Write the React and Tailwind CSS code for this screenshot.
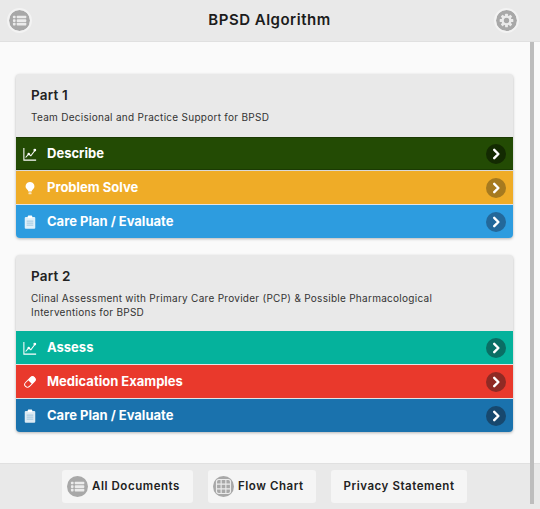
import React from "react";

const font = { fontFamily: '"Inter", "Open Sans", sans-serif' };

function ListGlyph({ className }) {
  return (
    <svg viewBox="0 0 24 24" className={className}>
      <circle cx="12" cy="12" r="12" fill="#a8a8a8" />
      <g fill="#ebebeb">
        <rect x="4.5" y="6.5" width="3" height="3" rx="0.8" />
        <rect x="4.5" y="10.6" width="3" height="3" rx="0.8" />
        <rect x="4.5" y="14.7" width="3" height="3" rx="0.8" />
        <rect x="8.8" y="6.5" width="11" height="3" rx="0.8" />
        <rect x="8.8" y="10.6" width="11" height="3" rx="0.8" />
        <rect x="8.8" y="14.7" width="11" height="3" rx="0.8" />
      </g>
    </svg>
  );
}

function GridGlyph({ className }) {
  return (
    <svg viewBox="0 0 24 24" className={className}>
      <circle cx="12" cy="12" r="12" fill="#a8a8a8" />
      <g stroke="#ebebeb" strokeWidth="1.3" fill="none">
        <rect x="4" y="4" width="16" height="16" rx="2.5" />
        <path d="M9.3 4v16M14.7 4v16M4 9.3h16M4 14.7h16" />
      </g>
    </svg>
  );
}

function Gear({ className }) {
  const teeth = [0, 45, 90, 135, 180, 225, 270, 315];
  return (
    <svg viewBox="0 0 24 24" className={className}>
      <circle cx="12" cy="12" r="12" fill="#a8a8a8" />
      <g fill="#ebebeb">
        {teeth.map((a) => (
          <rect key={a} x="10.4" y="4.2" width="3.2" height="4" rx="0.6" transform={`rotate(${a} 12 12)`} />
        ))}
      </g>
      <circle cx="12" cy="12" r="4.4" fill="none" stroke="#ebebeb" strokeWidth="2.6" />
    </svg>
  );
}

function ChartIcon() {
  return (
    <svg viewBox="0 0 16 16" className="w-[14px] h-[14px]" fill="none" stroke="#ffffff" strokeWidth="1.2">
      <path d="M1 1v14h14" />
      <path d="M3 12l3.5-4 2.5 2 4.5-6" />
      <circle cx="13.5" cy="3.5" r="1" fill="#ffffff" />
      <circle cx="6.5" cy="8" r="0.8" fill="#ffffff" />
    </svg>
  );
}

function BulbIcon() {
  return (
    <svg viewBox="0 0 16 16" className="w-[14px] h-[14px]">
      <path d="M8 1a5 5 0 0 0-3 9c.7.6 1 1.2 1 2h4c0-.8.3-1.4 1-2a5 5 0 0 0-3-9z" fill="#ffffff" />
      <rect x="6.2" y="12.8" width="3.6" height="2.4" rx="1" fill="#ffffff" opacity="0.7" />
    </svg>
  );
}

function ClipboardIcon() {
  return (
    <svg viewBox="0 0 16 16" className="w-[14px] h-[14px]">
      <rect x="2" y="2.2" width="12" height="13.6" rx="1.2" fill="#ffffff" opacity="0.85" />
      <rect x="5.5" y="0.6" width="5" height="3" rx="0.7" fill="#ffffff" />
      <path d="M4.2 7h7.6M4.2 9.3h7.6M4.2 11.6h7.6" stroke="#8fbbd8" strokeWidth="0.9" />
    </svg>
  );
}

function PillIcon() {
  return (
    <svg viewBox="0 0 16 16" className="w-[14px] h-[14px]">
      <g transform="rotate(-45 8 8)">
        <rect x="0.8" y="4.8" width="14.4" height="6.4" rx="3.2" fill="none" stroke="#ffffff" strokeWidth="1.1" />
        <path d="M8 4.8h4a3.2 3.2 0 0 1 0 6.4H8z" fill="#ffffff" />
      </g>
    </svg>
  );
}

function Chevron({ bg }) {
  return (
    <span className={`w-5 h-5 rounded-full flex items-center justify-center shrink-0 ${bg}`}>
      <svg viewBox="0 0 12 12" className="w-3 h-3" fill="none" stroke="#ffffff" strokeWidth="2.4" strokeLinecap="round" strokeLinejoin="round">
        <path d="M4.2 1.8L8.4 6 4.2 10.2" />
      </svg>
    </span>
  );
}

function Row({ icon, label, bg, chevron }) {
  return (
    <div className={`flex items-center pl-[7px] pr-[7px] text-white font-bold text-[13px] ${bg}`}>
      <span className="w-[14px] flex justify-center shrink-0">{icon}</span>
      <span className="ml-[10px] flex-1">{label}</span>
      <Chevron bg={chevron} />
    </div>
  );
}

function Card({ title, subtitle, children, headH }) {
  return (
    <section className="rounded-[4px] overflow-hidden shadow-[0_1px_3px_rgba(0,0,0,0.28)] bg-[#e9e9e9]">
      <div className={`px-[15px] pt-[13px] ${headH}`}>
        <h2 className="text-[13.5px] leading-[17px] font-semibold tracking-[0.2px] text-[#222222]">{title}</h2>
        <p className="mt-[6px] text-[10px] leading-[14px] tracking-[0.28px] text-[#333333]">{subtitle}</p>
      </div>
      <div className="flex flex-col">{children}</div>
    </section>
  );
}

function FootButton({ icon, label, className }) {
  return (
    <div className={`h-[33px] rounded-[3px] bg-[#f5f5f5] flex items-center gap-[4px] text-[11.5px] font-semibold text-[#222222] tracking-[0.55px] ${className}`}>
      {icon}
      <span>{label}</span>
    </div>
  );
}

export default function App() {
  return (
    <div style={font} className="relative w-[540px] h-[509px] flex flex-col overflow-hidden bg-[#fafafa]">
      <header className="h-[42px] shrink-0 bg-[#e9e9e9] border-b border-[#e0e0e0] grid grid-cols-[1fr_auto_1fr] items-center pl-[7px] pr-[21px]">
        <ListGlyph className="w-[21px] h-[21px] rounded-full border-2 border-[#f3f3f3] box-content" />
        <h1 className="text-[15px] font-semibold text-[#1c1c1c] tracking-[0.5px] pl-[13px]">BPSD Algorithm</h1>
        <Gear className="w-[21px] h-[21px] rounded-full border-2 border-[#f3f3f3] box-content justify-self-end" />
      </header>

      <main className="flex-1 pt-[32px] pl-[16px] pr-[27px] flex flex-col gap-[17px]">
        <Card title="Part 1" subtitle="Team Decisional and Practice Support for BPSD" headH="h-[63px]">
          <Row icon={<ChartIcon />} label="Describe" bg="bg-[#234b04] h-[33px] border-y border-[#1b3a03]" chevron="bg-[#132a02]" />
          <div className="h-[1px] bg-[#d9d9d9]" />
          <Row icon={<BulbIcon />} label="Problem Solve" bg="bg-[#efac27] h-[33px]" chevron="bg-[#a67a1f]" />
          <div className="h-[1px] bg-[#e3e3e3]" />
          <Row icon={<ClipboardIcon />} label="Care Plan / Evaluate" bg="bg-[#2d9cdf] h-[33px]" chevron="bg-[#23689a]" />
        </Card>

        <Card
          title="Part 2"
          subtitle={<>Clinal Assessment with Primary Care Provider (PCP) &amp; Possible Pharmacological<br />Interventions for BPSD</>}
          headH="h-[76px]"
        >
          <Row icon={<ChartIcon />} label="Assess" bg="bg-[#05b29c] h-[33px]" chevron="bg-[#0a6e64]" />
          <div className="h-[1px] bg-[#e3e3e3]" />
          <Row icon={<PillIcon />} label="Medication Examples" bg="bg-[#e9392c] h-[33px]" chevron="bg-[#8f2a24]" />
          <div className="h-[1px] bg-[#e3e3e3]" />
          <Row icon={<ClipboardIcon />} label="Care Plan / Evaluate" bg="bg-[#1a72ad] h-[33px]" chevron="bg-[#17486e]" />
        </Card>
      </main>

      <footer className="h-[46px] shrink-0 bg-[#e9e9e9] border-t border-[#e0e0e0] flex items-center pl-[62px] gap-[15px]">
        <FootButton className="w-[131px] pl-[5px]" icon={<ListGlyph className="w-[21px] h-[21px]" />} label="All Documents" />
        <FootButton className="w-[108px] pl-[5px]" icon={<GridGlyph className="w-[21px] h-[21px]" />} label="Flow Chart" />
        <FootButton className="w-[136px] justify-center" label="Privacy Statement" />
      </footer>

      <div className="absolute left-[530px] top-[42px] w-[4px] h-[462px] bg-[#bdbdbd]" />
    </div>
  );
}
